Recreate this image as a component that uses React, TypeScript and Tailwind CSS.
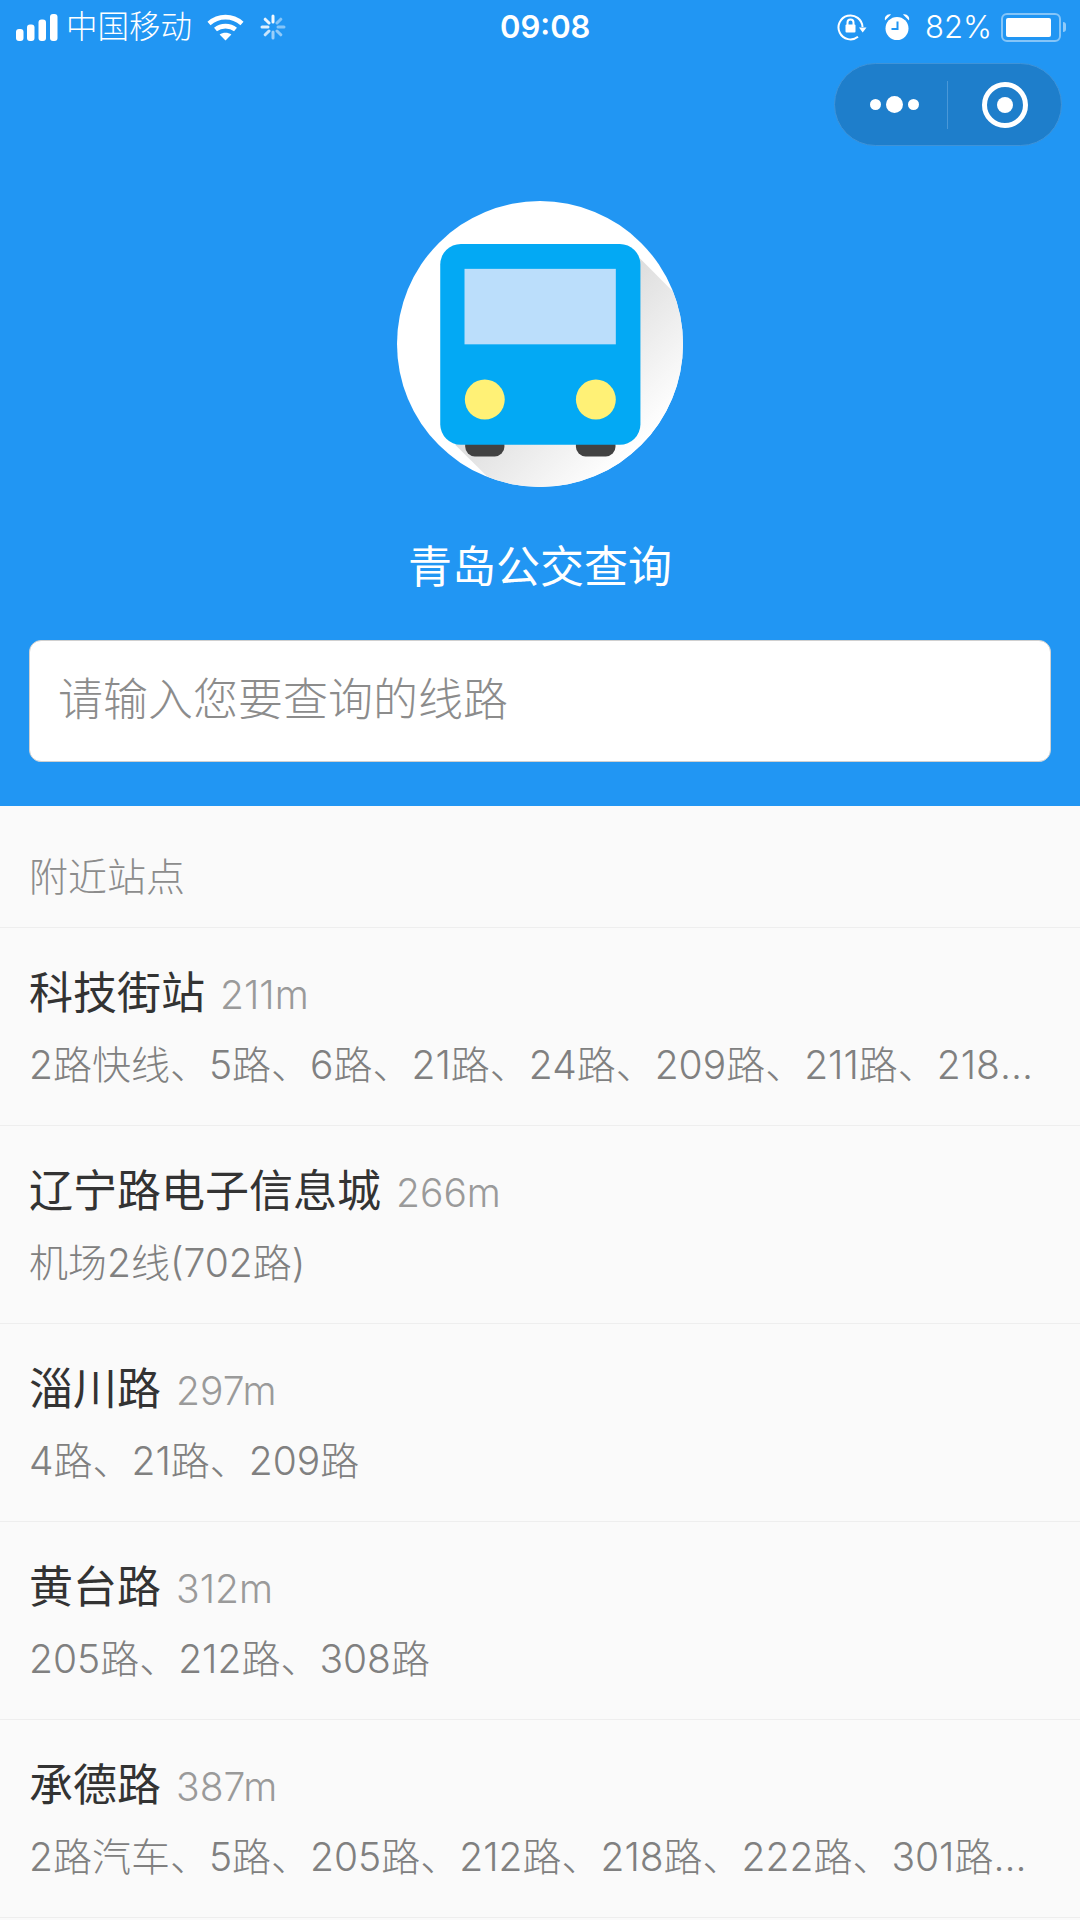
import React from 'react';

const FONT = 'Inter, "Noto Sans CJK SC", sans-serif';

const stations = [
  { name: '科技街站', distance: '211m', lines: '2路快线、5路、6路、21路、24路、209路、211路、218路、222路、301路' },
  { name: '辽宁路电子信息城', distance: '266m', lines: '机场2线(702路)' },
  { name: '淄川路', distance: '297m', lines: '4路、21路、209路' },
  { name: '黄台路', distance: '312m', lines: '205路、212路、308路' },
  { name: '承德路', distance: '387m', lines: '2路汽车、5路、205路、212路、218路、222路、301路、307路' },
];

const SignalIcon = () => (
  <svg width="42" height="27" viewBox="0 0 42 27" fill="white">
    <rect x="0" y="15" width="7.5" height="12" rx="3" />
    <rect x="11" y="10.5" width="7.5" height="16.5" rx="3" />
    <rect x="22.5" y="5.5" width="7.5" height="21.5" rx="3" />
    <rect x="34" y="0" width="7.5" height="27" rx="3" />
  </svg>
);

const WifiIcon = () => (
  <svg width="37" height="27" viewBox="0 0 37 27" fill="none" stroke="white" strokeWidth="4.6">
    <path d="M2 9.5C11.5 1 25.5 1 35 9.5" />
    <path d="M8.5 15.5C14 11 23 11 28.5 15.5" />
    <path d="M18.5 26.5L12.6 20.6C16 18 21 18 24.4 20.6Z" fill="white" stroke="none" />
  </svg>
);

const SpinnerIcon = () => (
  <svg width="26" height="26" viewBox="0 0 26 26" stroke="white" strokeWidth="3" strokeLinecap="round">
    <path d="M13 2V8" opacity="0.95" />
    <path d="M20.8 5.2L17 9" opacity="0.45" />
    <path d="M24 13H18" opacity="0.45" />
    <path d="M20.8 20.8L17 17" opacity="0.5" />
    <path d="M13 24V18" opacity="0.55" />
    <path d="M5.2 20.8L9 17" opacity="0.75" />
    <path d="M2 13H8" opacity="0.85" />
    <path d="M5.2 5.2L9 9" opacity="0.9" />
  </svg>
);

const RotationLockIcon = () => (
  <svg width="30" height="28" viewBox="0 0 30 28" fill="none" stroke="white" strokeWidth="2">
    <path d="M25.5 14A12 12 0 1 0 21 23.8" />
    <path d="M22 14.5H29.5L25.7 19.5Z" fill="white" stroke="none" />
    <rect x="8.5" y="11.5" width="10" height="8" rx="1" fill="white" stroke="none" />
    <path d="M10.5 12V9.5A3 3 0 0 1 16.5 9.5V12" />
  </svg>
);

const AlarmIcon = () => (
  <svg width="26" height="28" viewBox="0 0 26 28" fill="white">
    <circle cx="13" cy="15.5" r="11.5" />
    <path d="M1 7.5C0 4 3 0.5 7 1.5Z" />
    <path d="M25 7.5C26 4 23 0.5 19 1.5Z" />
    <path d="M13.5 8.5V16H7.5" fill="none" stroke="#2196f3" strokeWidth="2" />
  </svg>
);

const BatteryIcon = () => (
  <div className="flex items-center">
    <div className="w-[60px] h-[29px] rounded-[6px] border-[2px] border-white/45 p-[3px]">
      <div className="w-[45px] h-full bg-white rounded-[2px]" />
    </div>
    <div className="w-[3px] h-[10px] ml-[2px] bg-white/50 rounded-r-full" />
  </div>
);

// bus logo, viewBox numbers were measured off the 3x crop
const BusLogo = () => (
  <svg width="286" height="286" viewBox="50 33 860 860">
    <defs>
      <linearGradient id="busShadow" gradientUnits="userSpaceOnUse" x1="500" y1="500" x2="775" y2="775">
        <stop offset="0" stopColor="#dedede" />
        <stop offset="1" stopColor="#ffffff" />
      </linearGradient>
      <clipPath id="logoClip">
        <circle cx="480" cy="463" r="430" />
      </clipPath>
    </defs>
    <circle cx="480" cy="463" r="430" fill="#ffffff" />
    <path d="M765 190L1000 425V900H360L225 766Z" fill="url(#busShadow)" clipPath="url(#logoClip)" />
    <path d="M255 760H373V772A29 29 0 0 1 344 801H284A29 29 0 0 1 255 772Z" fill="#424242" />
    <path d="M588 760H707V772A29 29 0 0 1 678 801H617A29 29 0 0 1 588 772Z" fill="#424242" />
    <rect x="180" y="162" width="602" height="604" rx="62" fill="#03a9f4" />
    <rect x="253" y="237" width="455" height="227" fill="#bbdefb" />
    <circle cx="314" cy="630" r="60" fill="#fff176" />
    <circle cx="648" cy="630" r="60" fill="#fff176" />
  </svg>
);

const StationRow: React.FC<{ name: string; distance: string; lines: string }> = ({ name, distance, lines }) => (
  <div className="h-[198px] pl-[29px] pr-[30px] pt-[35px] border-b border-[#eeeeee]">
    <div className="flex items-baseline h-[60px] leading-[60px]">
      <span className="text-[44px] text-[#333333]">{name}</span>
      <span className="ml-[15px] text-[39px] font-light text-[#9a9a9a]">{distance}</span>
    </div>
    <div className="mt-[17px] h-[50px] leading-[50px] text-[39px] font-light text-[#808080] truncate">{lines}</div>
  </div>
);

const App: React.FC = () => {
  return (
    <div className="w-[1080px] h-[1920px] overflow-hidden bg-[#fafafa]" style={{ fontFamily: FONT }}>
      <header className="relative h-[806px] bg-[#2196f3] text-white">
        <div className="flex items-center h-[54px] pl-[16px] pr-[14px]">
          <div className="flex items-center w-[484px]">
            <SignalIcon />
            <span className="ml-[8px] text-[31.5px] font-light">中国移动</span>
            <span className="ml-[15px] flex"><WifiIcon /></span>
            <span className="ml-[16px] flex"><SpinnerIcon /></span>
          </div>
          <div className="w-[90px] text-center text-[31px] font-semibold">09:08</div>
          <div className="flex flex-1 items-center justify-end">
            <RotationLockIcon />
            <span className="ml-[17px] flex"><AlarmIcon /></span>
            <span className="ml-[15px] text-[31px] font-light">82%</span>
            <span className="ml-[9px] flex"><BatteryIcon /></span>
          </div>
        </div>

        <div className="absolute top-[63px] right-[18px] flex items-center w-[228px] h-[83px] rounded-full bg-[#1e7ecb] border border-[#3f93d8]">
          <div className="flex w-[112px] items-center justify-center gap-[5px] pl-[6px]">
            <span className="w-[11px] h-[11px] rounded-full bg-white" />
            <span className="w-[17px] h-[17px] rounded-full bg-white" />
            <span className="w-[11px] h-[11px] rounded-full bg-white" />
          </div>
          <div className="w-px h-[48px] bg-[#4a98d8]" />
          <div className="flex flex-1 items-center justify-center">
            <div className="flex items-center justify-center w-[46px] h-[46px] rounded-full border-[5px] border-white">
              <span className="w-[16px] h-[16px] rounded-full bg-white" />
            </div>
          </div>
        </div>

        <div className="flex flex-col items-center pt-[147px]">
          <BusLogo />
          <div className="mt-[50px] h-[60px] leading-[60px] text-[44px]">青岛公交查询</div>
        </div>

        <div className="mx-[29px] mt-[43px] h-[122px] px-[28px] pb-[2px] flex items-center rounded-[12px] bg-white border border-[#d0d0d0] text-[45px] font-light text-[#8c8c8c]">
          请输入您要查询的线路
        </div>
      </header>

      <div className="h-[122px] pl-[29px] pr-[30px] pt-[22px] flex items-center border-b border-[#eeeeee] text-[39px] font-light text-[#8c8c8c]">附近站点</div>

      {stations.map((s) => (
        <StationRow key={s.name} name={s.name} distance={s.distance} lines={s.lines} />
      ))}
    </div>
  );
};

export default App;
